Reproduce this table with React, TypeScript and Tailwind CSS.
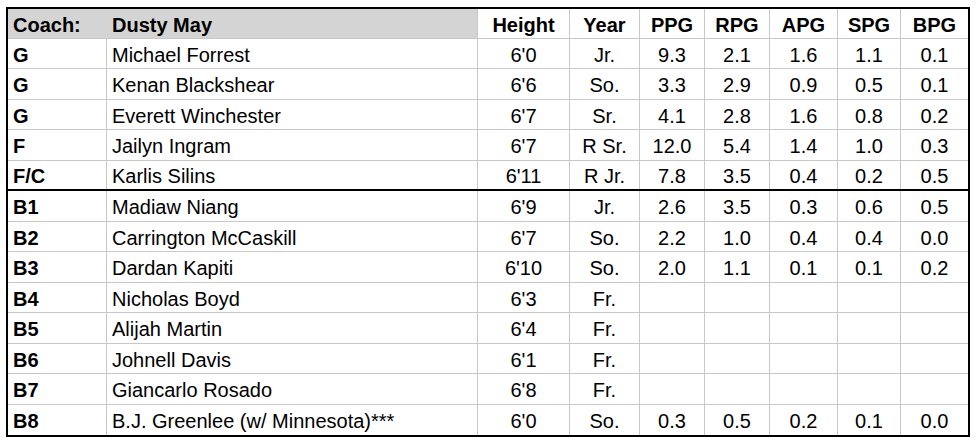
import React from "react";

type Player = {
  pos: string;
  name: string;
  ht: string;
  yr: string;
  stats?: string[];
};

const players: Player[] = [
  { pos: "G", name: "Michael Forrest", ht: "6'0", yr: "Jr.", stats: ["9.3", "2.1", "1.6", "1.1", "0.1"] },
  { pos: "G", name: "Kenan Blackshear", ht: "6'6", yr: "So.", stats: ["3.3", "2.9", "0.9", "0.5", "0.1"] },
  { pos: "G", name: "Everett Winchester", ht: "6'7", yr: "Sr.", stats: ["4.1", "2.8", "1.6", "0.8", "0.2"] },
  { pos: "F", name: "Jailyn Ingram", ht: "6'7", yr: "R Sr.", stats: ["12.0", "5.4", "1.4", "1.0", "0.3"] },
  { pos: "F/C", name: "Karlis Silins", ht: "6'11", yr: "R Jr.", stats: ["7.8", "3.5", "0.4", "0.2", "0.5"] },
  { pos: "B1", name: "Madiaw Niang", ht: "6'9", yr: "Jr.", stats: ["2.6", "3.5", "0.3", "0.6", "0.5"] },
  { pos: "B2", name: "Carrington McCaskill", ht: "6'7", yr: "So.", stats: ["2.2", "1.0", "0.4", "0.4", "0.0"] },
  { pos: "B3", name: "Dardan Kapiti", ht: "6'10", yr: "So.", stats: ["2.0", "1.1", "0.1", "0.1", "0.2"] },
  { pos: "B4", name: "Nicholas Boyd", ht: "6'3", yr: "Fr." },
  { pos: "B5", name: "Alijah Martin", ht: "6'4", yr: "Fr." },
  { pos: "B6", name: "Johnell Davis", ht: "6'1", yr: "Fr." },
  { pos: "B7", name: "Giancarlo Rosado", ht: "6'8", yr: "Fr." },
  { pos: "B8", name: "B.J. Greenlee (w/ Minnesota)***", ht: "6'0", yr: "So.", stats: ["0.3", "0.5", "0.2", "0.1", "0.0"] },
];

const cols = "grid grid-cols-[99px_371px_92px_70px_65px_65px_68px_63px_67px]";
const cell = "flex items-center border-r border-[#c8c8c8] pt-[2px]";
const num = cell + " justify-center";

export default function App() {
  return (
    <div className="bg-white w-[979px] h-[443px] pl-[6px] pt-[7px] text-black font-['Liberation_Sans',Arial,sans-serif] text-[20px] leading-none">
      <div className="w-[964px] border-2 border-black">
        {/* header */}
        <div className={cols + " h-[30px] border-b border-[#c8c8c8] font-bold"}>
          <div className={cell + " bg-[#d4d4d4] pl-[5px] border-r-0"}>Coach:</div>
          <div className={cell + " bg-[#d4d4d4] pl-[5px]"}>Dusty May</div>
          <div className={num}>Height</div>
          <div className={num}>Year</div>
          <div className={num}>PPG</div>
          <div className={num}>RPG</div>
          <div className={num}>APG</div>
          <div className={num}>SPG</div>
          <div className={num + " border-r-0"}>BPG</div>
        </div>

        {players.map((p, i) => {
          const last = i === players.length - 1;
          const h = i % 2 === 0 ? "h-[30px]" : "h-[31px]";
          const line = last ? "" : p.pos === "F/C" ? "border-b-2 border-b-black" : "border-b border-b-[#c8c8c8]";
          return (
            <div key={p.name} className={`${cols} ${h} ${line}`}>
              <div className={cell + " pl-[5px] font-bold"}>{p.pos}</div>
              <div className={cell + " pl-[5px]"}>{p.name}</div>
              <div className={num}>{p.ht}</div>
              <div className={num}>{p.yr}</div>
              {[0, 1, 2, 3, 4].map((k) => (
                <div key={k} className={num + (k === 4 ? " border-r-0" : "")}>
                  {p.stats ? p.stats[k] : ""}
                </div>
              ))}
            </div>
          );
        })}
      </div>
    </div>
  );
}
